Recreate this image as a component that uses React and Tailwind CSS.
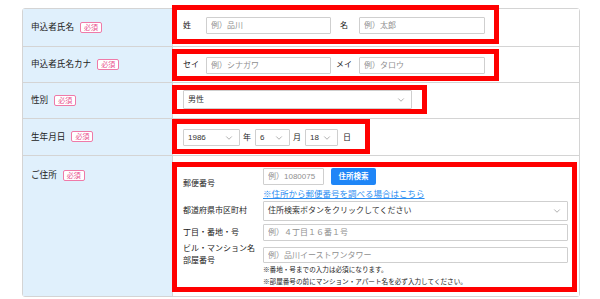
import { ChevronDown } from 'lucide-react';

function Badge() {
  return (
    <span className="ml-[6px] inline-flex h-[11px] items-center rounded-[2px] border border-[#ef7aa8] bg-white px-[3px] text-[7px] leading-none text-[#e8508e]">
      必須
    </span>
  );
}

function Row({ label, className, labelClass = 'items-center', children }) {
  return (
    <div className={`flex border-b border-[#d4d4d4] ${className}`}>
      <div
        className={`flex w-[150px] shrink-0 border-r border-[#d4d4d4] bg-[#e0f0fc] pl-[8px] text-[8.6px] text-[#222] ${labelClass}`}
      >
        <span className="flex items-center">
          {label}
          <Badge />
        </span>
      </div>
      <div className="flex min-w-0 flex-1 flex-col items-start bg-white">{children}</div>
    </div>
  );
}

function RedBox({ className, children }) {
  return (
    <div className={`-ml-[1px] border-[5px] border-[#ff0000] bg-white ${className}`}>{children}</div>
  );
}

function TextInput({ placeholder, className = '' }) {
  return (
    <input
      readOnly
      placeholder={placeholder}
      className={`rounded-[1px] border border-[#cfcfcf] bg-white px-[4px] text-[8px] text-[#333] outline-none placeholder:text-[#8f8f8f] ${className}`}
    />
  );
}

function Select({ value, className = '' }) {
  return (
    <div
      className={`flex items-center justify-between rounded-[1px] border border-[#cfcfcf] bg-white pl-[4px] pr-[5px] text-[8px] text-[#333] ${className}`}
    >
      <span>{value}</span>
      <ChevronDown className="h-[10px] w-[10px] text-[#777]" strokeWidth={1.4} />
    </div>
  );
}

function SubLabel({ children }) {
  return <div className="w-[80px] shrink-0 self-center text-[8px] leading-[12px] text-[#222]">{children}</div>;
}

export default function App() {
  return (
    <div className="h-[299px] w-[600px] bg-white pt-[8px] font-['Liberation_Sans','Noto_Sans_CJK_JP',sans-serif]">
      <div className="ml-[22px] w-[558px] rounded-[3px] border border-[#d4d4d4]">
        <Row label="申込者氏名" className="h-[38px]">
          <RedBox className="-mt-[4px] flex h-[39px] w-[327px] items-center pl-[6px] pt-[2px] text-[8px] text-[#222]">
            <span className="w-[23px]">姓</span>
            <TextInput placeholder="例）品川" className="h-[17px] w-[125px]" />
            <span className="ml-[9px] w-[19px]">名</span>
            <TextInput placeholder="例）太郎" className="h-[17px] w-[126px]" />
          </RedBox>
        </Row>

        <Row label="申込者氏名カナ" className="h-[36px]">
          <RedBox className="mt-[2px] flex h-[32px] w-[327px] items-center pl-[6px] text-[8px] text-[#222]">
            <span className="w-[23px]">セイ</span>
            <TextInput placeholder="例）シナガワ" className="h-[17px] w-[125px]" />
            <span className="ml-[5px] w-[23px]">メイ</span>
            <TextInput placeholder="例）タロウ" className="h-[17px] w-[126px]" />
          </RedBox>
        </Row>

        <Row label="性別" className="h-[36px]">
          <RedBox className="mt-[2px] flex h-[29px] w-[255px] items-center pl-[6px]">
            <Select value="男性" className="h-[19px] w-[229px]" />
          </RedBox>
        </Row>

        <Row label="生年月日" className="h-[37px]">
          <RedBox className="flex h-[35px] w-[198px] items-center gap-[3px] pl-[6px] pt-[2px] text-[8px] text-[#222]">
            <Select value="1986" className="h-[17px] w-[57px]" />
            <span>年</span>
            <Select value="6" className="ml-[1px] h-[17px] w-[35px]" />
            <span>月</span>
            <Select value="18" className="ml-[1px] h-[17px] w-[33px]" />
            <span className="ml-[2px]">日</span>
          </RedBox>
        </Row>

        <Row label="ご住所" className="h-[140px] border-b-0" labelClass="items-start pt-[13px]">
          <RedBox className="mt-[6px] h-[130px] w-[405px] pl-[6px] pr-[3px] pt-[1px]">
            <div className="flex">
              <SubLabel>郵便番号</SubLabel>
              <div className="flex flex-col">
                <div className="flex items-center">
                  <TextInput placeholder="例）1080075" className="h-[17px] w-[61px]" />
                  <span className="ml-[7px] flex h-[17px] w-[45px] items-center justify-center rounded-[2px] bg-[#1f86f7] text-[7.5px] font-bold text-white">
                    住所検索
                  </span>
                </div>
                <span className="mt-[3px] text-[8.5px] leading-[12px] text-[#2b8ef2] underline">
                  ※住所から郵便番号を調べる場合はこちら
                </span>
              </div>
            </div>

            <div className="mt-[1px] flex">
              <SubLabel>都道府県市区町村</SubLabel>
              <Select value="住所検索ボタンをクリックしてください" className="h-[20px] w-[305px]" />
            </div>

            <div className="mt-[3px] flex">
              <SubLabel>丁目・番地・号</SubLabel>
              <TextInput placeholder="例）４丁目１６番１号" className="h-[17px] w-[305px]" />
            </div>

            <div className="mt-[2px] flex h-[24px]">
              <SubLabel>
                ビル・マンション名
                <br />
                部屋番号
              </SubLabel>
              <TextInput placeholder="例）品川イーストワンタワー" className="h-[16px] w-[305px] self-center" />
            </div>

            <div className="-mt-[3px] pl-[80px] text-[6.6px] leading-[12px] text-[#222]">
              <div>※番地・号までの入力は必須になります。</div>
              <div>※部屋番号の前にマンション・アパート名を必ず入力してください。</div>
            </div>
          </RedBox>
        </Row>
      </div>
    </div>
  );
}
